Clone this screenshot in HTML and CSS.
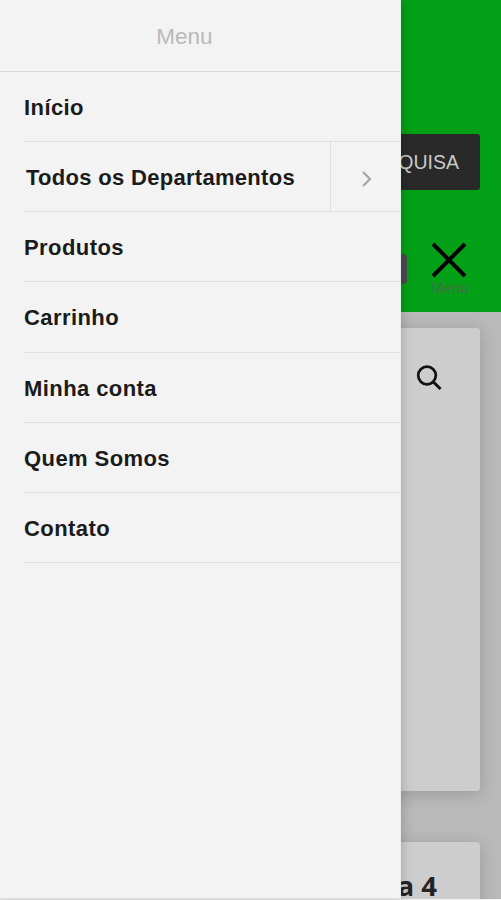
FILE: index.html
```html
<!DOCTYPE html>
<html lang="pt-BR">
<head>
<meta charset="utf-8">
<title>Menu</title>
<link rel="stylesheet" href="styles.css">
</head>
<body>
<div class="page">
  <header class="header">
    <button class="search-button">PESQUISA</button>
    <div class="actions">
      <span class="cart"></span>
      <div class="toggle">
        <svg width="36" height="36" viewBox="0 0 36 36"><path d="M2 2L34 34M34 2L2 34" fill="none" stroke="#000" stroke-width="4"/></svg>
        <span class="toggle-label">Menu</span>
      </div>
    </div>
  </header>
  <main class="content">
    <section class="card gallery">
      <svg width="28" height="28" viewBox="0 0 28 28"><g fill="none" stroke="#111" stroke-width="2.7"><circle cx="12" cy="11.5" r="8.8"/><path d="M18 17.5L25.5 25" stroke-width="3.1"/></g></svg>
    </section>
    <section class="card summary"><h1 class="product">a 4</h1></section>
  </main>
</div>
<nav class="drawer">
  <div class="drawer-title">Menu</div>
  <ul class="list">
    <li class="item"><a>Início</a></li>
    <li class="item parent"><a>Todos os Departamentos</a>
      <span class="next"><svg width="12" height="18" viewBox="0 0 12 18"><path d="M2 2L9 9L2 16" fill="none" stroke="#a7a7a7" stroke-width="2.2"/></svg></span></li>
    <li class="item"><a>Produtos</a></li>
    <li class="item"><a>Carrinho</a></li>
    <li class="item"><a>Minha conta</a></li>
    <li class="item"><a>Quem Somos</a></li>
    <li class="item"><a>Contato</a></li>
  </ul>
</nav>
</body>
</html>
```
FILE: styles.css
```css
* { box-sizing: border-box; }
body {
  margin: 0;
  position: relative;
  height: 900px;
  overflow: hidden;
  background: #f0f0f0;
  font-family: "Liberation Sans", Arial, sans-serif;
}
.page {
  height: 899px;
  overflow: hidden;
  background: #b9b9b9;
}
.header {
  height: 312px;
  padding: 134px 21px 0 0;
  display: flex;
  flex-direction: column;
  align-items: flex-end;
  background: #02a016;
}
.search-button {
  width: 160px;
  height: 56px;
  padding: 0 21px 0 0;
  border: 0;
  border-radius: 3px;
  background: #292929;
  color: #c9c9c9;
  font: 19.5px "Liberation Sans", Arial, sans-serif;
  text-align: right;
}
.actions {
  display: flex;
  align-items: flex-start;
  gap: 23px;
  margin: 52px 10px 0 0;
}
.cart {
  width: 30px;
  height: 30px;
  margin-top: 12px;
  border-radius: 4px;
  background: #4b4850;
}
.toggle {
  display: flex;
  flex-direction: column;
  align-items: center;
  width: 40px;
}
.toggle svg { display: block; margin-right: 2px; }
.toggle-label {
  margin-top: 2px;
  color: #4d6a50;
  font: 14px/16px "Open Sans", sans-serif;
}
.content {
  display: flex;
  flex-direction: column;
  gap: 51px;
  padding: 16px 21px 0;
}
.card {
  border-radius: 4px;
  background: #cdcdcd;
  box-shadow: 0 3px 16px rgba(0, 0, 0, 0.17);
}
.gallery {
  height: 463px;
  padding: 36px 37px 0 0;
  display: flex;
  justify-content: flex-end;
}
.summary {
  height: 90px;
  padding: 25px 43px 0 0;
}
.product {
  margin: 0;
  color: #252326;
  font: bold 27.5px/38px "Open Sans", sans-serif;
  text-align: right;
}
.drawer {
  position: absolute;
  top: 0;
  left: 0;
  width: 401px;
  height: 899px;
  border-right: 1px solid #e6f0e6;
  border-bottom: 1px solid #dedede;
  background: #f3f3f3;
  box-shadow: 0 0 12px rgba(0, 0, 0, 0.22);
}
.drawer-title {
  height: 72px;
  padding-right: 31px;
  border-bottom: 1px solid #d9d9d9;
  color: #b9b9b9;
  font-size: 22.5px;
  line-height: 73px;
  text-align: center;
}
.list {
  margin: 0;
  padding: 0 0 0 24px;
  list-style: none;
}
.item {
  display: flex;
  justify-content: space-between;
  height: 70.15px;
  border-bottom: 1px solid #dfdfdf;
  color: #1b1b1b;
  font-size: 22px;
  font-weight: bold;
  line-height: 71px;
  letter-spacing: 0.42px;
}
.parent { letter-spacing: 0.3px; }
.parent a { padding-left: 2px; }
.next {
  display: flex;
  align-items: center;
  justify-content: center;
  width: 70px;
  padding: 4px 0 0 2px;
  border-left: 1px solid #dfdfdf;
}
```
